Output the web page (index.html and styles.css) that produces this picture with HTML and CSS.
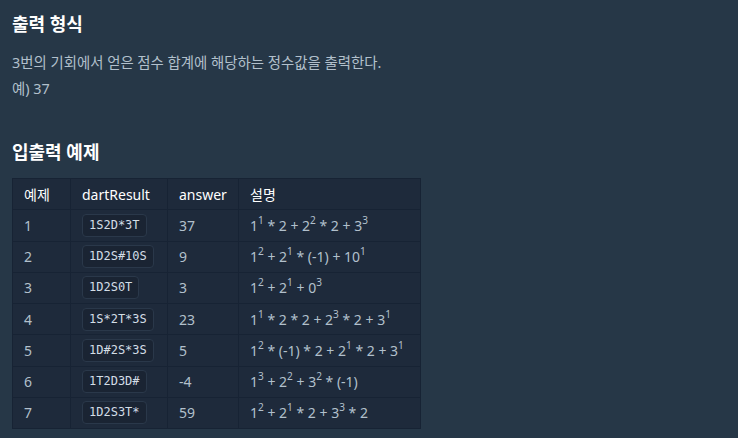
FILE: index.html
```html
<!DOCTYPE html>
<html>
	<head>
		<meta charset="UTF-8">
		<title>다트 게임 - 출력 형식</title>
		<link rel="stylesheet" href="styles.css">
	</head>
	<body>
		<div class="guide">
			<h5>출력 형식</h5>
			<p>3번의 기회에서 얻은 점수 합계에 해당하는 정수값을 출력한다.<br>예) 37</p>

			<h5 class="gap">입출력 예제</h5>
			<table>
				<thead>
					<tr><th class="c1">예제</th><th class="c2">dartResult</th><th class="c3">answer</th><th>설명</th></tr>
				</thead>
				<tbody>
					<tr><td>1</td><td><code>1S2D*3T</code></td><td>37</td><td>1<sup>1</sup> * 2 + 2<sup>2</sup> * 2 + 3<sup>3</sup></td></tr>
					<tr><td>2</td><td><code>1D2S#10S</code></td><td>9</td><td>1<sup>2</sup> + 2<sup>1</sup> * (-1) + 10<sup>1</sup></td></tr>
					<tr><td>3</td><td><code>1D2S0T</code></td><td>3</td><td>1<sup>2</sup> + 2<sup>1</sup> + 0<sup>3</sup></td></tr>
					<tr><td>4</td><td><code>1S*2T*3S</code></td><td>23</td><td>1<sup>1</sup> * 2 * 2 + 2<sup>3</sup> * 2 + 3<sup>1</sup></td></tr>
					<tr><td>5</td><td><code>1D#2S*3S</code></td><td>5</td><td>1<sup>2</sup> * (-1) * 2 + 2<sup>1</sup> * 2 + 3<sup>1</sup></td></tr>
					<tr><td>6</td><td><code>1T2D3D#</code></td><td>-4</td><td>1<sup>3</sup> + 2<sup>2</sup> + 3<sup>2</sup> * (-1)</td></tr>
					<tr><td>7</td><td><code>1D2S3T*</code></td><td>59</td><td>1<sup>2</sup> + 2<sup>1</sup> * 2 + 3<sup>3</sup> * 2</td></tr>
				</tbody>
			</table>
		</div>
	</body>
</html>
```

FILE: styles.css
```css
html, body {
	margin : 0; padding : 0;
	background : #263747;
}
body {
	font-family : "Noto Sans", "Noto Sans CJK KR", sans-serif;
	font-size : 14px;
	color : #b2c0cc;
}
.guide {
	padding : 12px 12px;
}
h5 {
	margin : 0;
	font-size : 18px;
	font-weight : bold;
	line-height : 24px;
	color : #ffffff;
}
h5.gap {
	margin-top : 38px;
}
p {
	margin : 14px 0 0;
	font-size : 14.4px;
	line-height : 26px;
}
table {
	margin-top : 14px;
	width : 409px;
	border-collapse : collapse;
	background : #1e2a3b;
	border : 1px solid #172334;
}
th, td {
	border : 1px solid #172334;
	padding : 0 11px;
	height : 30.25px;
	text-align : left;
	white-space : nowrap;
}
th {
	font-weight : normal;
	color : #ffffff;
}
th.c1 { width : 35px; }
th.c2 { width : 74px; }
th.c3 { width : 48px; }
sup {
	font-size : 0.72em;
	line-height : 0;
	vertical-align : 0.65em;
}
code {
	display : inline-block;
	font-family : "DejaVu Sans Mono", monospace;
	font-size : 12px;
	line-height : 15px;
	color : #d3dde6;
	background : #1a2433;
	border : 1px solid #2a384a;
	border-radius : 4px;
	padding : 3px 6px;
	vertical-align : middle;
}
```
